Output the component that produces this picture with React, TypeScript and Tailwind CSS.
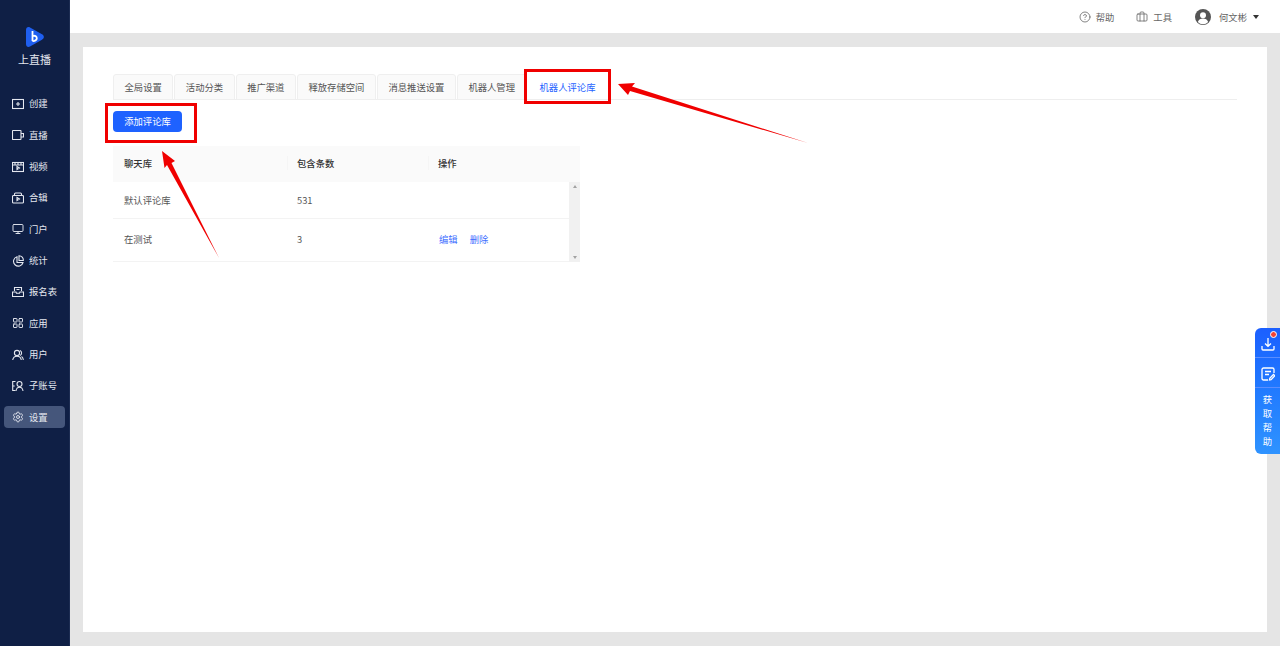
import { CircleHelp, Briefcase, Monitor, Settings, LayoutGrid } from "lucide-react";

const font = { fontFamily: '"Noto Sans CJK SC", sans-serif' };

function Ico({ children }: { children: React.ReactNode }) {
  return (
    <svg viewBox="0 0 12 12" className="h-3 w-3 shrink-0" fill="none" stroke="currentColor" strokeWidth="1.1">
      {children}
    </svg>
  );
}

const navItems: { label: string; icon: React.ReactNode; active?: boolean }[] = [
  { label: "创建", icon: <Ico><rect x="0.5" y="1.5" width="11" height="9" /><path d="M4 6h4M6 4v4" /></Ico> },
  { label: "直播", icon: <Ico><rect x="0.5" y="1.5" width="8.5" height="9" rx="0.5" /><path d="M9 4.500h2.500v3.500H9" /></Ico> },
  { label: "视频", icon: <Ico><rect x="0.5" y="1.5" width="11" height="9" /><path d="M0.500 4h11M3 1.500v2.500M6 1.500v2.500M9 1.500v2.500M5 5.500l2.500 1.500L5 8.500z" /></Ico> },
  { label: "合辑", icon: <Ico><rect x="0.5" y="3.500" width="11" height="7.500" rx="1" /><path d="M2.500 3.500V2a1 1 0 011-1h5a1 1 0 011 1v1.500M5 5.500l2.500 1.500L5 8.500z" /></Ico> },
  { label: "门户", icon: <Monitor size={12} strokeWidth={1.9} /> },
  { label: "统计", icon: <Ico><path d="M5 1.700a4.800 4.800 0 106 5.800H5z" /><path d="M7 0.700a4.300 4.300 0 014.300 4.800H7z" /></Ico> },
  { label: "报名表", icon: <Ico><path d="M2.500 5V1.500h7V5M4.500 3.500h3" /><path d="M0.500 6h3.500l.5 1.300h3L8 6h3.500v4.500h-11z" /></Ico> },
  { label: "应用", icon: <LayoutGrid size={12} strokeWidth={1.9} /> },
  { label: "用户", icon: <Ico><circle cx="5" cy="4" r="2.600" /><path d="M0.700 11c.4-2.500 2-3.800 4.300-3.800s3.900 1.300 4.300 3.800M8 1.600a2.600 2.600 0 010 4.800M9.500 7.500c1 .6 1.600 1.800 1.900 3.300" /></Ico> },
  { label: "子账号", icon: <Ico><path d="M3.500 1.500H.7v9h2.800M.7 6h2" /><circle cx="7.500" cy="4" r="2.500" /><path d="M4 11c.3-2.400 1.500-3.800 3.500-3.800S10.700 8.600 11 11" /></Ico> },
  { label: "设置", icon: <Settings size={12} strokeWidth={1.8} />, active: true },
];

const tabs = ["全局设置", "活动分类", "推广渠道", "释放存储空间", "消息推送设置", "机器人管理"];

function Sidebar() {
  return (
    <aside className="flex w-[70px] shrink-0 flex-col border-r border-[#1c2c52] bg-[#0f1f45]">
      <div className="flex h-[88px] flex-col items-center pt-[26px]">
        <svg viewBox="0 0 20 22" className="h-[22px] w-[20px]">
          <path d="M5 1.500C3 .500 1 1.500 1 4v14c0 2.500 2 3.500 4 2.500l12-6.800c2.500-1.400 2.500-4 0-5.400z" fill="#1f5ff0" />
          <path d="M7.500 5v10" stroke="#fff" strokeWidth="1.800" fill="none" />
          <path d="M7.500 10c2.500-.8 4.300.3 4.300 2.200s-2 3-4.300 2.800" stroke="#fff" strokeWidth="1.800" fill="none" />
        </svg>
        <span className="mt-[3px] text-[11px] leading-4 text-[#e4e7ef]">上直播</span>
      </div>
      <nav className="flex flex-col">
        {navItems.map((item) => (
          <div key={item.label} className="flex h-[31.33px] items-center px-1 pt-px">
            <div className={"flex h-[22px] w-[61px] items-center gap-[5px] rounded-sm pl-2 text-[#e4e7ef] " + (item.active ? "bg-[#45567b]" : "")}>
              {item.icon}
              <span className="text-[9.33px] leading-none">{item.label}</span>
            </div>
          </div>
        ))}
      </nav>
    </aside>
  );
}

function TopBar() {
  return (
    <header className="flex h-[33px] shrink-0 items-center justify-end bg-white pr-[21px] text-[9.33px] text-[#666]">
      <CircleHelp size={12} strokeWidth={1.6} />
      <span className="ml-[5px]">帮助</span>
      <Briefcase size={12} strokeWidth={1.6} className="ml-[22px]" />
      <span className="ml-[5px]">工具</span>
      <svg viewBox="0 0 16 16" className="ml-[23px] h-4 w-4">
        <circle cx="8" cy="8" r="8" fill="#555" />
        <circle cx="8" cy="6.200" r="3" fill="#fff" />
        <path d="M2.800 13c.8-2.500 2.800-3.500 5.200-3.500s4.400 1 5.200 3.500a7 7 0 01-10.400 0z" fill="#fff" />
      </svg>
      <span className="ml-2">何文彬</span>
      <span className="ml-[6px] h-0 w-0 border-x-[3.500px] border-t-[4px] border-x-transparent border-t-[#333]" />
    </header>
  );
}

function Tabs() {
  return (
    <div className="flex h-[26px] gap-px border-b border-[#eeeeee]">
      {tabs.map((t) => (
        <div key={t} className="flex h-[26px] items-center rounded-t-[3px] border border-[#efefef] bg-[#fafafa] px-[10.5px] text-[9.33px] text-[#555]">
          {t}
        </div>
      ))}
      <div className="flex h-[25px] items-center bg-white px-3 text-[9.33px] text-[#1e62ff]">机器人评论库</div>
    </div>
  );
}

function CommentTable() {
  return (
    <div className="mt-[14px] w-[467px] text-[9.33px]">
      <div className="flex h-9 items-center bg-[#fafafa] pb-[2px] font-medium text-[#333]">
        <div className="w-[174px] pl-[11px]">聊天库</div>
        <div className="w-[141px] border-l border-[#f5f5f5] pl-[9px]">包含条数</div>
        <div className="flex-1 border-l border-[#f5f5f5] pl-[9px]">操作</div>
      </div>
      <div className="flex">
        <div className="flex-1 text-[#555]">
          <div className="flex h-[37px] items-center border-b border-[#f3f3f3]">
            <div className="w-[174px] pl-[11px]">默认评论库</div>
            <div className="pl-[10px]">531</div>
          </div>
          <div className="flex h-[43px] items-center border-b border-[#f3f3f3] pb-[2px]">
            <div className="w-[174px] pl-[11px]">在测试</div>
            <div className="w-[141px] pl-[10px]">3</div>
            <div className="flex gap-3 pl-[11px] text-[#3f6fff]">
              <span>编辑</span>
              <span>删除</span>
            </div>
          </div>
        </div>
        <div className="flex w-[11px] flex-col items-center justify-between bg-[#f1f1f1] py-[3px]">
          <span className="h-0 w-0 border-x-[2.500px] border-b-[3px] border-x-transparent border-b-[#a3a3a3]" />
          <span className="h-0 w-0 border-x-[2.500px] border-t-[3px] border-x-transparent border-t-[#a3a3a3]" />
        </div>
      </div>
    </div>
  );
}

function HelpWidget() {
  return (
    <div className="absolute left-[1255px] top-[328px] flex h-[126px] w-[25px] flex-col items-center rounded-l-md bg-gradient-to-b from-[#1c5fff] to-[#2f93ff] text-white">
      <div className="relative flex h-[30px] w-full items-center justify-center border-b border-[#5a8dff] pt-[3px]">
        <svg viewBox="0 0 14 14" className="h-[14px] w-[14px]" fill="none" stroke="#fff" strokeWidth="1.300">
          <path d="M7 1v8M4 6.500L7 9.300l3-2.800M1 9v3a1 1 0 001 1h10a1 1 0 001-1V9" />
        </svg>
        <span className="absolute right-[3px] top-[3px] h-[7px] w-[7px] rounded-full border border-white bg-[#f44336]" />
      </div>
      <div className="flex h-[30px] w-full items-center justify-center border-b border-[#5a8dff] pt-[2px]">
        <svg viewBox="0 0 14 14" className="h-[14px] w-[14px]" fill="none" stroke="#fff" strokeWidth="1.300">
          <path d="M7 13H2.500A1.500 1.500 0 011 11.500v-9A1.500 1.500 0 012.500 1h9A1.500 1.500 0 0113 2.500V6M4 4.500h6M4 7.500h4M8.500 13l.3-1.800 3.700-3.700 1.300 1.300-3.700 3.800z" />
        </svg>
      </div>
      <div className="flex flex-col items-center pt-[4px] text-[9.33px] leading-[14px]">
        <span>获</span>
        <span>取</span>
        <span>帮</span>
        <span>助</span>
      </div>
    </div>
  );
}

// red callouts drawn on top of the screenshot
function Annotations() {
  return (
    <>
      <div className="absolute left-[105px] top-[103px] h-[40px] w-[92px] border-[3px] border-[#f00000]" />
      <div className="absolute left-[524px] top-[69px] h-[35px] w-[87px] border-[3px] border-[#f00000]" />
      <svg className="pointer-events-none absolute left-0 top-0 h-[646px] w-[1280px]" viewBox="0 0 1280 646">
        <path d="M618 84L635 83L632 86.500L808 143L630 91L628 95z" fill="#f00000" />
        <path d="M162 151L175 161L171.500 163L219 258L167 165L164.500 168z" fill="#f00000" />
      </svg>
    </>
  );
}

export default function App() {
  return (
    <div className="relative flex h-[646px] w-[1280px] overflow-hidden bg-[#e5e5e5]" style={font}>
      <Sidebar />
      <div className="flex flex-1 flex-col">
        <TopBar />
        <main className="mx-[13px] mt-[14px] h-[585px] bg-white px-[30px] pt-[27px]">
          <Tabs />
          <button className="mt-[11px] flex h-[21px] w-[69px] items-center justify-center rounded-sm bg-[#1e62ff] pb-px text-[9.33px] text-white">
            添加评论库
          </button>
          <CommentTable />
        </main>
      </div>
      <HelpWidget />
      <Annotations />
    </div>
  );
}
